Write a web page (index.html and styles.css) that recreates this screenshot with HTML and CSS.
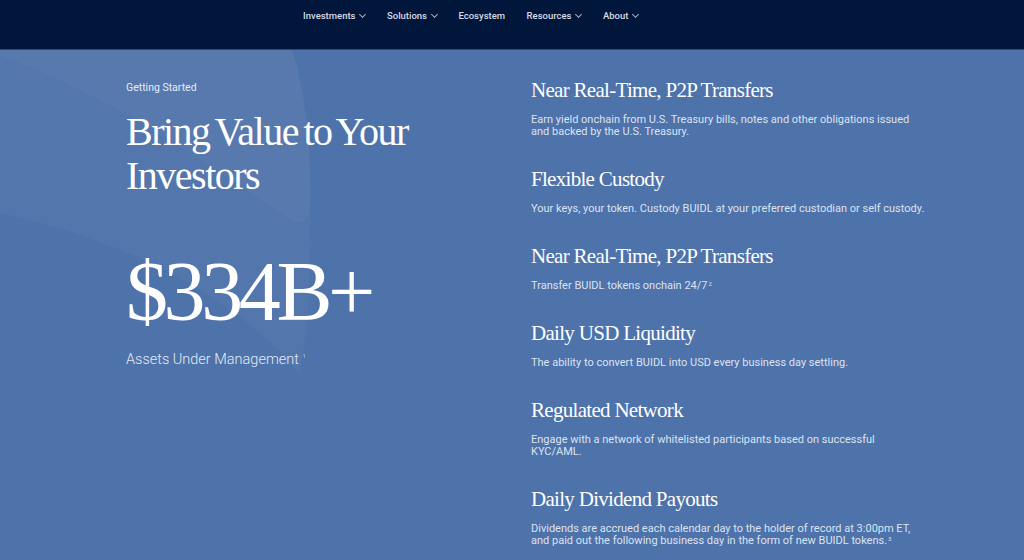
FILE: index.html
```html
<!DOCTYPE html>
<html lang="en">

<head>
    <meta charset="UTF-8" />
    <meta name="viewport" content="width=device-width, initial-scale=1.0" />
    <title>BUIDL - Getting Started</title>
    <link rel="stylesheet" href="styles.css">
</head>

<body>
    <div id="header">
        <ul class="main-nav">
            <li>Investments <span class="chevron"></span></li>
            <li>Solutions <span class="chevron"></span></li>
            <li>Ecosystem</li>
            <li>Resources <span class="chevron"></span></li>
            <li>About <span class="chevron"></span></li>
        </ul>
    </div>

    <div class="intro">
        <!-- soft leaf shapes behind the intro text -->
        <svg class="intro-bg" width="1024" height="510" viewBox="0 0 1024 510">
            <path d="M0 0 L292 0 C306 40 312 110 310 158 C309 170 300 176 292 170 C200 110 110 45 0 6 Z"
                fill="rgba(255,255,255,0.05)" />
            <path d="M0 6 C110 45 200 110 292 170 C300 176 309 170 310 158 C312 220 308 280 300 325 C230 240 120 190 0 163 Z"
                fill="rgba(255,255,255,0.03)" />
        </svg>

        <div class="intro-grid">
            <div class="intro-left">
                <p class="eyebrow">Getting Started</p>
                <h1>Bring Value to Your Investors</h1>
                <p class="big-number">$334B+</p>
                <p class="big-number-label">Assets Under Management <sup>1</sup></p>
            </div>

            <div class="intro-right">
                <div class="feature">
                    <h2>Near Real-Time, P2P Transfers</h2>
                    <p>Earn yield onchain from U.S. Treasury bills, notes and other obligations issued and backed by the U.S. Treasury.</p>
                </div>
                <div class="feature">
                    <h2>Flexible Custody</h2>
                    <p>Your keys, your token. Custody BUIDL at your preferred custodian or self custody.</p>
                </div>
                <div class="feature">
                    <h2>Near Real-Time, P2P Transfers</h2>
                    <p>Transfer BUIDL tokens onchain 24/7<sup>2</sup></p>
                </div>
                <div class="feature">
                    <h2>Daily USD Liquidity</h2>
                    <p>The ability to convert BUIDL into USD every business day settling.</p>
                </div>
                <div class="feature">
                    <h2>Regulated Network</h2>
                    <p>Engage with a network of whitelisted participants based on successful KYC/AML.</p>
                </div>
                <div class="feature">
                    <h2>Daily Dividend Payouts</h2>
                    <p>Dividends are accrued each calendar day to the holder of record at 3:00pm ET, and paid out the following business day in the form of new BUIDL tokens.<sup>3</sup></p>
                </div>
            </div>
        </div>
    </div>
</body>

</html>
```

FILE: styles.css
```css
/* Base Styles */
body {
    margin: 0;
    background-color: #4e72aa;
    font-family: Roboto, "Liberation Sans", sans-serif;
    overflow: hidden;
}

#header {
    height: 50px;
    background-color: #00173b;
    border-bottom: 1px solid #2a4672;
    box-sizing: border-box;
}

.main-nav {
    display: flex;
    gap: 21.5px;
    margin: 0;
    padding: 10px 0 0 303px;
    list-style: none;
}

.main-nav li {
    display: flex;
    align-items: center;
    gap: 4px;
    color: #d3dbe8;
    font-size: 9.5px;
    font-weight: 500;
    line-height: 12px;
}

.chevron {
    width: 4px;
    height: 4px;
    border-right: 1px solid #9fb0cb;
    border-bottom: 1px solid #9fb0cb;
    transform: rotate(45deg);
    margin: -3px 0 0 1px;
}

/* Intro section */
.intro {
    position: relative;
    height: 510px;
    overflow: hidden;
}

.intro-bg {
    position: absolute;
    top: 0;
    left: 0;
}

.intro-grid {
    position: relative;
    display: grid;
    grid-template-columns: 405px 394px;
    padding: 28px 0 0 126px;
}

.eyebrow {
    margin: 3px 0 15px;
    color: #e4ebf6;
    font-size: 10.5px;
    line-height: 14px;
}

.intro-left h1 {
    margin: 0;
    width: 300px;
    color: #fff;
    font-family: "Liberation Serif", serif;
    font-size: 40px;
    font-weight: 400;
    line-height: 44px;
    letter-spacing: -1.5px;
    word-spacing: -3px;
}

.big-number {
    margin: 52px 0 0;
    color: #fff;
    font-family: "Liberation Serif", serif;
    font-size: 84px;
    line-height: 84px;
    letter-spacing: -4.4px;
}

.big-number-label {
    margin: 17px 0 0;
    color: #e4ebf6;
    font-size: 14.5px;
    font-weight: 300;
    line-height: 18px;
}

.big-number-label sup {
    font-size: 6px;
    line-height: 0;
    vertical-align: 6px;
}

/* Feature list */
.feature {
    margin-bottom: 29px;
}

.feature h2 {
    margin: 0 0 12px;
    color: #fff;
    font-family: "Liberation Serif", serif;
    font-size: 21px;
    font-weight: 400;
    line-height: 24px;
    letter-spacing: -0.7px;
}

.feature p {
    margin: 0;
    color: #dbe3f1;
    font-size: 11px;
    line-height: 12px;
}

.feature sup {
    margin-left: 1px;
    font-size: 6px;
    line-height: 0;
    vertical-align: 3px;
}
```
